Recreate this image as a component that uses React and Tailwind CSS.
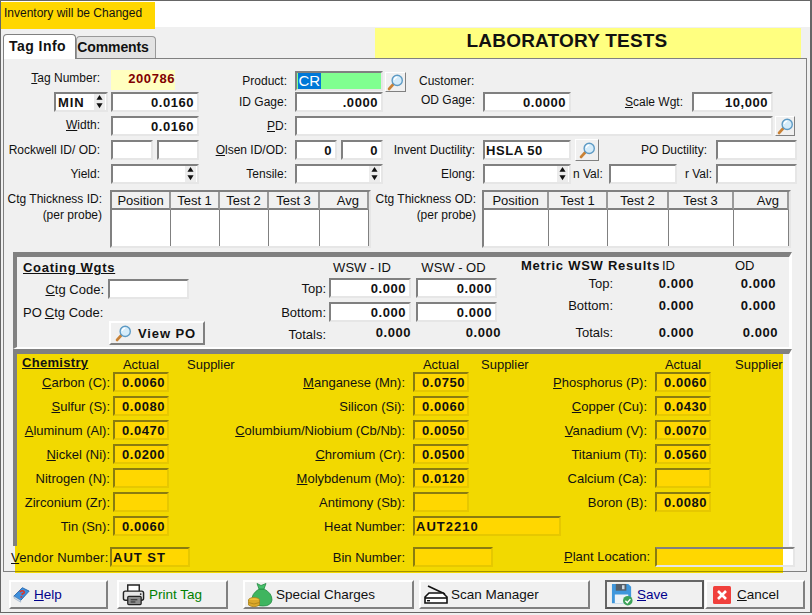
import React from 'react';

const Label = ({ w, children, className = '' }) => (
  <div className={`${w} shrink-0 text-right whitespace-nowrap ${className}`}>{children}</div>
);

const Field = ({ w, children, left = false, className = '', h = 'h-[20px]' }) => (
  <div
    className={`${w} ${h} shrink-0 bg-white border-2 border-t-[#808080] border-l-[#808080] border-r-[#e6e6e6] border-b-[#e6e6e6] flex items-center ${left ? 'justify-start pl-[1px]' : 'justify-end pr-[3px]'} font-bold text-[13px] tracking-[0.55px] ${className}`}
  >
    {children}
  </div>
);

const ChemField = ({ w, children, left = false }) => (
  <div
    className={`${w} h-[20px] shrink-0 bg-[#ffd700] border-2 border-t-[#8a7c10] border-l-[#8a7c10] border-r-[#e6c800] border-b-[#e6c800] flex items-center ${left ? 'justify-start pl-[1px] tracking-[1px]' : 'justify-end pr-[2px] tracking-[0.55px]'} font-bold text-[13px]`}
  >
    {children}
  </div>
);

const SpinArrows = () => (
  <div className="flex flex-col gap-[1px] w-[11px] h-[16px] shrink-0 bg-[#ececec]">
    <svg viewBox="0 0 11 8" className="w-[11px] h-[7px]"><path d="M5.5 1 L9 6.5 H2 Z" fill="#111" /></svg>
    <svg viewBox="0 0 11 8" className="w-[11px] h-[7px]"><path d="M2 1.5 H9 L5.5 7 Z" fill="#111" /></svg>
  </div>
);

const Spin = ({ w }) => (
  <Field w={w} className="!pr-[1px]"><SpinArrows /></Field>
);

const Lens = ({ size = 'w-[17px] h-[17px]' }) => (
  <svg viewBox="0 0 20 20" className={size}>
    <path d="M7 12.5 L2.5 17.5" stroke="#c98236" strokeWidth="3.4" strokeLinecap="round" />
    <circle cx="12" cy="7.5" r="6" fill="#d5ecfa" stroke="#5d9ac4" strokeWidth="1.6" />
    <path d="M8.5 7 A4 4 0 0 1 12 3.6" stroke="#fff" strokeWidth="1.4" fill="none" />
  </svg>
);

const SearchBtn = ({ w, h = 'h-[20px]', className = '' }) => (
  <div className={`${w} ${h} shrink-0 bg-[#f0f0f0] border border-t-white border-l-white border-r-[#808080] border-b-[#808080] flex items-center justify-center ${className}`}>
    <Lens />
  </div>
);

const TableGrid = ({ w, cols, heads }) => (
  <div className={`${w} h-[58px] shrink-0 bg-white border-2 border-t-[#808080] border-l-[#808080] border-r-[#e6e6e6] border-b-[#e6e6e6] grid ${cols} grid-rows-[18px_1fr] text-[13px]`}>
    {heads.map((h) => (
      <div key={h} className={`bg-[#f0f0f0] border-r-2 border-r-[#9a9a9a] border-b-2 border-b-[#808080] flex items-center ${h === 'Avg' ? 'justify-end pr-[8px]' : 'justify-center'}`}>{h}</div>
    ))}
    {heads.map((h) => (
      <div key={h} className="border-r border-r-[#808080]" />
    ))}
  </div>
);

const Help = () => (
  <svg viewBox="0 0 20 20" className="w-[17px] h-[17px] shrink-0">
    <path d="M1 12 L11 2 L19 6 L9 17 Z" fill="#3f8fdc" stroke="#1f5fa8" strokeWidth="1" />
    <path d="M1 12 L9 17 L9 19 L1.5 14.5 Z" fill="#dbe6f2" stroke="#7d99b8" strokeWidth="0.6" />
    <path d="M8 7 Q11 4.5 13 6.5 Q14 8.5 11 9 L10.6 10.6" stroke="#d9342b" strokeWidth="1.8" fill="none" />
    <circle cx="9.8" cy="12.8" r="1.1" fill="#d9342b" />
  </svg>
);

const Printer = () => (
  <svg viewBox="0 0 24 24" className="w-[23px] h-[23px] shrink-0">
    <path d="M6 9 V2 H18 V9" fill="#fff" stroke="#222" strokeWidth="1.5" />
    <rect x="1.5" y="8.5" width="21" height="9.5" rx="2" fill="#e6e6e6" stroke="#222" strokeWidth="1.5" />
    <rect x="6" y="14" width="14" height="8.5" rx="1" fill="#8d8d8d" stroke="#222" strokeWidth="1.3" />
    <path d="M9 17.5 H16 M9 19.8 H14" stroke="#222" strokeWidth="1" />
    <circle cx="19.5" cy="11.5" r="0.9" fill="#222" />
  </svg>
);

const MoneyBag = () => (
  <svg viewBox="0 0 26 26" className="w-[26px] h-[26px] shrink-0">
    <path d="M12 7 Q4 12 5 19 Q7 24 16 24 Q24 24 25 18 Q25 11 17 7 Z" fill="#3fb55f" stroke="#258a42" strokeWidth="0.8" />
    <path d="M10 1.5 L14 3.5 L19 1.5 L17 7 H12 Z" fill="#46c06a" stroke="#258a42" strokeWidth="0.8" />
    <ellipse cx="7" cy="18" rx="5.5" ry="2.4" fill="#f0c23c" stroke="#a8801a" strokeWidth="0.8" />
    <path d="M1.5 18 V23 Q7 26.5 12.5 23 V18" fill="#dca92a" stroke="#a8801a" strokeWidth="0.8" />
    <path d="M1.5 20.5 Q7 23.5 12.5 20.5" stroke="#a8801a" strokeWidth="0.8" fill="none" />
  </svg>
);

const Scanner = () => (
  <svg viewBox="0 0 24 20" className="w-[24px] h-[20px] shrink-0">
    <path d="M4 1 L21 9" stroke="#111" strokeWidth="1.6" />
    <path d="M2 11 L5 8 H19 L23 12 V18 H1 V12 Z" fill="#fff" stroke="#111" strokeWidth="1.6" />
    <path d="M1 13 H23" stroke="#111" strokeWidth="1.6" />
    <rect x="3" y="15" width="3" height="1.4" fill="#111" />
  </svg>
);

const Save = () => (
  <svg viewBox="0 0 24 24" className="w-[23px] h-[23px] shrink-0">
    <path d="M1 1 H18 L21 4 V21 H1 Z" fill="#3f97dc" />
    <rect x="5" y="1" width="11" height="7" fill="#565f69" />
    <rect x="11.5" y="2.3" width="2.6" height="4.2" fill="#cdd8e2" />
    <rect x="4" y="12" width="14" height="9" fill="#edf3f8" />
    <circle cx="17.5" cy="18.5" r="5" fill="#3da35a" />
    <path d="M15 18.5 L17 20.5 L20.2 16.8" stroke="#fff" strokeWidth="1.5" fill="none" />
  </svg>
);

const CancelIcon = () => (
  <svg viewBox="0 0 18 18" className="w-[18px] h-[18px] shrink-0">
    <rect width="18" height="18" rx="1.5" fill="#f0403c" />
    <path d="M5 5 L13 13 M13 5 L5 13" stroke="#fff" strokeWidth="2.6" />
  </svg>
);

const Btn = ({ w, children, className = '' }) => (
  <div className={`${w} h-[29px] shrink-0 bg-[#f0f0f0] border-2 border-t-white border-l-white border-r-[#808080] border-b-[#808080] flex items-center text-[13.5px] ${className}`}>
    {children}
  </div>
);

const chemRows = [
  [<><u>C</u>arbon (C):</>, '0.0060', <><u>M</u>anganese (Mn):</>, '0.0750', <><u>P</u>hosphorus (P):</>, '0.0060'],
  [<><u>S</u>ulfur (S):</>, '0.0080', 'Silicon (Si):', '0.0060', <><u>C</u>opper (Cu):</>, '0.0430'],
  [<><u>A</u>luminum (Al):</>, '0.0470', <><u>C</u>olumbium/Niobium (Cb/Nb):</>, '0.0050', <><u>V</u>anadium (V):</>, '0.0070'],
  [<><u>N</u>ickel (Ni):</>, '0.0200', <><u>C</u>hromium (Cr):</>, '0.0500', 'Titanium (Ti):', '0.0560'],
  ['Nitrogen (N):', '', <><u>M</u>olybdenum (Mo):</>, '0.0120', 'Calcium (Ca):', ''],
  ['Zirconium (Zr):', '', 'Antimony (Sb):', '', 'Boron (B):', '0.0080'],
];

export default function App() {
  return (
    <div className="w-[812px] h-[615px] bg-[#f0f0f0] overflow-hidden font-[Liberation_Sans] text-[13px] leading-[15px] text-[#111]">
      <div className="h-[613px] border-t border-l border-r-2 border-b border-[#666] flex flex-col">
        {/* top strip */}
        <div className="h-[26px] bg-white shrink-0">
          <div className="w-[154px] h-[27px] mt-[1px] bg-[#ffd700] flex items-center pl-[3px] pb-[5px] relative whitespace-nowrap text-[12px]">Inventory will be Changed</div>
        </div>

        {/* tabs and title */}
        <div className="h-[31px] shrink-0 flex items-end pl-[2px] pr-[9px]">
          <div className="w-[73px] h-[25px] bg-white border border-b-0 border-[#808080] rounded-t-[4px] flex items-center justify-center pr-[4px] pb-[2px] font-bold text-[14px] tracking-[0.45px] relative z-10 -mb-[1px]">Tag Info</div>
          <div className="w-[80px] h-[22px] bg-[#e3e3e3] border border-b-0 border-[#999] rounded-t-[4px] flex items-center justify-center pr-[6px] font-bold text-[14px] tracking-[-0.1px]">Comments</div>
          <div className="ml-auto w-[426px] h-[30px] bg-[#ffff80] flex items-center justify-center pr-[42px] font-bold text-[19px] pb-[6px] tracking-[0.2px]">LABORATORY TESTS</div>
        </div>

        {/* tab panel */}
        <div className="ml-[2px] w-[804px] h-[514px] shrink-0 border border-[#808080] bg-[#f0f0f0] pt-[11px] flex flex-col">
          <div className="h-[22px] shrink-0 flex items-start text-[12px]">
            <Label w="w-[96px]" className="pt-[1px]"><u>T</u>ag Number:</Label>
            <div className="ml-[11px] w-[64px] h-[20px] bg-[#ffffc0] flex items-center justify-end pb-[3px] font-bold text-[13px] text-[#800000] tracking-[0.55px]">200786</div>
            <Label w="w-[112px]" className="pt-[4px]">Product:</Label>
            <div className="ml-[8px] w-[88px] h-[20px] mt-[1px] bg-[#80ff90] border-2 border-t-[#808080] border-l-[#808080] border-r-[#e6e6e6] border-b-[#e6e6e6] flex items-center pl-[1px]">
              <span className="bg-[#0078d7] text-white text-[15px] leading-[16px] px-[0.5px]">CR</span>
            </div>
            <SearchBtn w="w-[21px]" className="ml-[2px] mt-[2px]" />
            <div className="ml-[13px] pt-[4px]">Customer:</div>
          </div>

          <div className="h-[20px] shrink-0 flex items-center text-[12px]">
            <div className="ml-[50px] w-[54px] h-[20px] shrink-0 bg-white border-2 border-t-[#808080] border-l-[#808080] border-r-[#e6e6e6] border-b-[#e6e6e6] flex items-center justify-between pl-[2px] pr-[1px] font-bold text-[13px] tracking-[0.9px]">MIN<SpinArrows /></div>
            <Field w="w-[88px]" className="ml-[3px]">0.0160</Field>
            <Label w="w-[88px]">ID Gage:</Label>
            <Field w="w-[88px]" className="ml-[8px]">.0000</Field>
            <Label w="w-[92px]" className="-mt-[3px]">OD Gage:</Label>
            <Field w="w-[88px]" className="ml-[8px]">0.0000</Field>
            <Label w="w-[112px]"><u>S</u>cale Wgt:</Label>
            <Field w="w-[81px]" className="ml-[9px]">10,000</Field>
          </div>

          <div className="h-[20px] mt-[4px] shrink-0 flex items-center text-[12px]">
            <Label w="w-[96px]" className="-mt-[1px]"><u>W</u>idth:</Label>
            <Field w="w-[88px]" className="ml-[11px]">0.0160</Field>
            <Label w="w-[88px]"><u>P</u>D:</Label>
            <Field w="w-[478px]" className="ml-[8px]" />
            <SearchBtn w="w-[20px]" className="ml-[2px]" />
          </div>

          <div className="h-[20px] mt-[4px] shrink-0 flex items-center text-[12px]">
            <Label w="w-[96px]" className="mt-[1px]">Rockwell ID/ OD:</Label>
            <Field w="w-[42px]" className="ml-[11px]" />
            <Field w="w-[42px]" className="ml-[4px]" />
            <Label w="w-[88px]" className="mt-[1px]"><u>O</u>lsen ID/OD:</Label>
            <Field w="w-[42px]" className="ml-[8px]">0</Field>
            <Field w="w-[42px]" className="ml-[4px]">0</Field>
            <Label w="w-[92px]" className="mt-[1px]">Invent Ductility:</Label>
            <Field w="w-[88px]" left className="ml-[8px]">HSLA 50</Field>
            <SearchBtn w="w-[24px]" h="h-[22px]" className="ml-[4px]" />
            <Label w="w-[108px]" className="mt-[1px]">PO Ductility:</Label>
            <Field w="w-[81px]" className="ml-[9px]" />
          </div>

          <div className="h-[20px] mt-[4px] shrink-0 flex items-center text-[12px]">
            <Label w="w-[96px]">Yield:</Label>
            <Spin w="w-[88px] ml-[11px]" />
            <Label w="w-[88px]">Tensile:</Label>
            <Spin w="w-[88px] ml-[8px]" />
            <Label w="w-[92px]">Elong:</Label>
            <Spin w="w-[88px] ml-[8px]" />
            <div className="ml-[2px] w-[30px] shrink-0 whitespace-nowrap">n Val:</div>
            <Field w="w-[68px]" className="ml-[6px]" />
            <Label w="w-[35px]">r Val:</Label>
            <Field w="w-[81px]" className="ml-[4px]" />
          </div>

          <div className="h-[58px] mt-[6px] shrink-0 flex items-start text-[12px]">
            <div className="w-[98px] pt-[1px] shrink-0 text-right leading-[16px] whitespace-nowrap">Ctg Thickness ID:<br />(per probe)</div>
            <div className="ml-[8px]">
              <TableGrid w="w-[261px]" cols="grid-cols-[59px_49px_49px_51px_1fr]" heads={['Position', 'Test 1', 'Test 2', 'Test 3', 'Avg']} />
            </div>
            <div className="w-[105px] pt-[1px] shrink-0 text-right leading-[16px] whitespace-nowrap">Ctg Thickness OD:<br />(per probe)</div>
            <div className="ml-[6px]">
              <TableGrid w="w-[309px]" cols="grid-cols-[65px_59px_61px_65px_1fr]" heads={['Position', 'Test 1', 'Test 2', 'Test 3', 'Avg']} />
            </div>
          </div>

          {/* coating weights */}
          <div className="ml-[9px] mt-[4px] w-[779px] h-[97px] shrink-0 border-t-[5px] border-l-[4px] border-r-[3px] border-b-[2px] border-t-[#808080] border-l-[#808080] border-r-white border-b-white flex">
            <div className="w-[193px] shrink-0 pl-[6px] pt-[3px] flex flex-col">
              <div className="font-bold underline tracking-[0.7px] h-[16px] whitespace-nowrap">Coating Wgts</div>
              <div className="mt-[3px] flex items-center h-[20px]">
                <Label w="w-[81px]"><u>C</u>tg Code:</Label>
                <Field w="w-[81px]" className="ml-[4px]" />
              </div>
              <div className="mt-[3px] h-[20px] flex items-center whitespace-nowrap">PO <u className="ml-[3px]">C</u>tg Code:</div>
              <div className="ml-[86px] w-[96px] h-[24px] bg-[#f0f0f0] border-2 border-t-white border-l-white border-r-[#808080] border-b-[#808080] flex items-center gap-[6px] pl-[4px] font-bold tracking-[0.9px] -mt-[1px] whitespace-nowrap">
                <Lens />View PO
              </div>
            </div>

            <div className="w-[295px] shrink-0 flex flex-col">
              <div className="h-[21px] flex items-center">
                <div className="ml-[111px] w-[82px] text-center whitespace-nowrap">WSW - ID</div>
                <div className="ml-[10px] w-[81px] text-center whitespace-nowrap">WSW - OD</div>
              </div>
              <div className="h-[20px] flex items-center">
                <Label w="w-[116px]">Top:</Label>
                <Field w="w-[82px]" className="ml-[3px]">0.000</Field>
                <Field w="w-[81px]" className="ml-[5px]">0.000</Field>
              </div>
              <div className="h-[20px] mt-[4px] flex items-center">
                <Label w="w-[116px]">Bottom:</Label>
                <Field w="w-[82px]" className="ml-[3px]">0.000</Field>
                <Field w="w-[81px]" className="ml-[5px]">0.000</Field>
              </div>
              <div className="h-[20px] mt-[2px] flex items-center">
                <Label w="w-[116px]">Totals:</Label>
                <div className="ml-[3px] w-[82px] text-right font-bold tracking-[0.55px] pb-[3px]">0.000</div>
                <div className="ml-[5px] w-[85px] text-right font-bold tracking-[0.55px] pb-[3px]">0.000</div>
              </div>
            </div>

            <div className="flex-1 flex flex-col pt-[2px]">
              <div className="h-[13px] flex items-center">
                <div className="ml-[16px] w-[141px] font-bold tracking-[0.75px] whitespace-nowrap">Metric WSW Results</div>
                <div className="w-[73px]">ID</div>
                <div>OD</div>
              </div>
              {[['Top:', 'mt-[1px]', '0.000', 'w-[82px]'], ['Bottom:', 'mt-[2px]', '0.000', 'w-[82px]'], ['Totals:', 'mt-[7px]', '0.000', 'w-[84px]']].map(([t, mt, v, w2]) => (
                <div key={t} className={`h-[20px] ${mt} flex items-center`}>
                  <Label w="w-[108px]">{t}</Label>
                  <div className="w-[81px] text-right font-bold tracking-[0.55px]">{v}</div>
                  <div className={`${w2} text-right font-bold tracking-[0.55px]`}>{v}</div>
                </div>
              ))}
            </div>
          </div>

          {/* chemistry */}
          <div className="ml-[9px] w-[779px] h-[197px] shrink-0 border-t-[5px] border-l-[4px] border-r-[3px] border-t-[#808080] border-l-[#808080] border-r-white">
            <div className="w-[766px] h-full bg-[#f2d900] flex flex-col">
              <div className="h-[18px] shrink-0 flex items-center">
                <div className="w-[96px] pl-[5px] font-bold underline tracking-[0.3px] -mt-[2px]">Chemistry</div>
                <div className="w-[56px] text-center pt-[3px]">Actual</div>
                <div className="w-[244px] pl-[18px] pt-[3px]">Supplier</div>
                <div className="w-[56px] text-center pt-[3px]">Actual</div>
                <div className="w-[186px] pl-[12px] pt-[3px]">Supplier</div>
                <div className="w-[56px] text-center pt-[3px]">Actual</div>
                <div className="pl-[24px] pt-[3px]">Supplier</div>
              </div>
              <div className="flex flex-col gap-[4px]">
                {chemRows.map((r, i) => (
                  <div key={i} className="h-[20px] flex items-center">
                    <Label w="w-[93px]">{r[0]}</Label>
                    <div className="ml-[3px]"><ChemField w="w-[56px]">{r[1]}</ChemField></div>
                    <Label w="w-[236px]">{r[2]}</Label>
                    <div className="ml-[8px]"><ChemField w="w-[56px]">{r[3]}</ChemField></div>
                    <Label w="w-[178px]">{r[4]}</Label>
                    <div className="ml-[8px]"><ChemField w="w-[56px]">{r[5]}</ChemField></div>
                  </div>
                ))}
                <div className="h-[20px] flex items-center">
                  <Label w="w-[93px]">Tin (Sn):</Label>
                  <div className="ml-[3px]"><ChemField w="w-[56px]">0.0060</ChemField></div>
                  <Label w="w-[236px]">Heat Number:</Label>
                  <div className="ml-[8px]"><ChemField w="w-[148px]" left>AUT2210</ChemField></div>
                </div>
              </div>
            </div>
          </div>

          {/* vendor row, the yellow block runs over the panel edge */}
          <div className="ml-[11px] w-[768px] h-[27px] shrink-0 bg-[#f2d900] pb-[1px] relative">
            <div className="h-full border-b border-b-[#a39200] flex items-start pt-[1px]">
              <Label w="w-[97px] -ml-[4px] tracking-[0.2px]" className="pt-[3px]"><u>V</u>endor Number:</Label>
              <div className="ml-[2px]"><ChemField w="w-[80px]" left>AUT ST</ChemField></div>
              <Label w="w-[215px]" className="pt-[3px]">Bin Number:</Label>
              <div className="ml-[8px]"><ChemField w="w-[80px]" /></div>
              <Label w="w-[157px]" className="pt-[2px]"><u>P</u>lant Location:</Label>
              <div className="ml-[5px] w-[140px] h-[20px] shrink-0 flex border-2 border-t-[#808080] border-l-[#8a7c10] border-r-[#e6e6e6] border-b-[#e6e6e6]">
                <div className="flex-1 bg-[#ffd700]" />
                <div className="w-[10px] bg-white" />
              </div>
            </div>
          </div>
        </div>

        {/* footer buttons */}
        <div className="flex pl-[8px] mt-[8px] relative">
          <Btn w="w-[99px]" className="pl-[2px] gap-[4px]"><Help /><span className="text-[#00008b]"><u>H</u>elp</span></Btn>
          <Btn w="w-[111px]" className="ml-[9px] pl-[3px] gap-[4px]"><Printer /><span className="text-[#008000]">Print Tag</span></Btn>
          <Btn w="w-[171px]" className="ml-[15px] pl-[2px] gap-[3px]"><MoneyBag /><span>Special Charges</span></Btn>
          <Btn w="w-[171px]" className="ml-[5px] pl-[3px] gap-[3px]"><Scanner /><span>Scan Manager</span></Btn>
          <Btn w="w-[99px]" className="ml-[15px] pl-[4px] gap-[3px] !border-t-[#666] !border-l-[#666] !border-r-[#555] !border-b-[#555]"><Save /><span className="text-[#00008b]"><u>S</u>ave</span></Btn>
          <Btn w="w-[100px]" className="ml-[1px] pl-[6px] gap-[6px]"><CancelIcon /><span><u>C</u>ancel</span></Btn>
        </div>
      </div>
    </div>
  );
}
